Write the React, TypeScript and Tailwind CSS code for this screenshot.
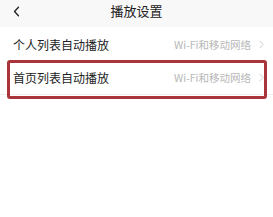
import React from "react";

function Chevron({ className }: { className?: string }) {
  return (
    <svg viewBox="0 0 8 14" className={className} fill="none" stroke="currentColor" strokeWidth={1.3} strokeLinecap="round" strokeLinejoin="round">
      <path d="M1.5 1.5 L6.5 7 L1.5 12.5" />
    </svg>
  );
}

function Row({ label }: { label: string }) {
  return (
    <div className="flex items-center h-[33px] pl-[13px] pr-[9px]">
      <span className="text-[12px] text-[#222]">{label}</span>
      <span className="ml-auto text-[10.5px] text-[#b8b8b8]">Wi-Fi和移动网络</span>
      <Chevron className="w-[5px] h-[9px] ml-[8px] text-[#c4c4c4]" />
    </div>
  );
}

export default function App() {
  return (
    <div
      className="w-[273px] h-[217px] bg-white overflow-hidden"
      style={{ fontFamily: '"Noto Sans CJK SC", "Noto Sans", sans-serif' }}
    >
      {/* header */}
      <div className="relative h-[27px] bg-[#f8f8f8] flex items-center justify-center">
        <svg viewBox="0 0 8 14" className="absolute left-[13px] top-[6px] w-[7px] h-[11px] text-[#222]" fill="none" stroke="currentColor" strokeWidth={1.7} strokeLinecap="round" strokeLinejoin="round">
          <path d="M6.5 1.5 L1.5 7 L6.5 12.5" />
        </svg>
        <span className="text-[13px] text-[#222] -mt-[5px]">播放设置</span>
      </div>

      <div className="pt-[1px]">
        <Row label="个人列表自动播放" />
        <div className="relative">
          <div className="border-b border-[#f0f0f0]">
            <Row label="首页列表自动播放" />
          </div>
          <div className="absolute left-[7px] right-[6px] top-[-1px] bottom-[-4px] border-[3px] border-[#a9343a] rounded-[3px]" />
        </div>
      </div>
    </div>
  );
}
